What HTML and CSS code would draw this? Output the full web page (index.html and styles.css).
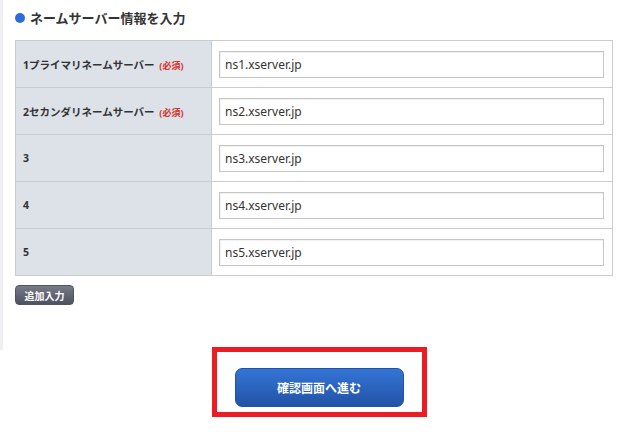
FILE: index.html
```html
<!DOCTYPE html>
<html lang="ja">
<head>
<meta charset="UTF-8" />
<meta name="viewport" content="width=device-width, initial-scale=1" />
<title>ネームサーバー情報を入力</title>
<link rel="stylesheet" href="styles.css">
</head>
<body>
<div class="panel">
  <h2 class="heading"><span class="dot"></span>ネームサーバー情報を入力</h2>
  <table class="ns-table">
    <tr>
      <th>1プライマリネームサーバー <span class="req">(必須)</span></th>
      <td><input type="text" value="ns1.xserver.jp"></td>
    </tr>
    <tr>
      <th>2セカンダリネームサーバー <span class="req">(必須)</span></th>
      <td><input type="text" value="ns2.xserver.jp"></td>
    </tr>
    <tr>
      <th>3</th>
      <td><input type="text" value="ns3.xserver.jp"></td>
    </tr>
    <tr>
      <th>4</th>
      <td><input type="text" value="ns4.xserver.jp"></td>
    </tr>
    <tr>
      <th>5</th>
      <td><input type="text" value="ns5.xserver.jp"></td>
    </tr>
  </table>
  <button class="add-btn">追加入力</button>
</div>
<div class="submit-area">
  <div class="highlight">
    <button class="submit-btn">確認画面へ進む</button>
  </div>
</div>
</body>
</html>
```

FILE: styles.css
```css
body {
  margin: 0;
  background-color: #ffffff;
  font-family: "Noto Sans", "Noto Sans CJK JP", sans-serif;
  color: #333333;
}
.panel {
  border-left: 3px solid #eef0f4;
  padding: 9px 27px 46px 12px;
  height: 295px;
}
.heading {
  display: flex;
  align-items: center;
  margin: 0 0 13px 0;
  font-size: 13px;
  font-weight: bold;
  line-height: 18px;
  color: #333333;
}
.dot {
  width: 10px;
  height: 10px;
  border-radius: 50%;
  background-color: #2f6bd6;
  margin-right: 5px;
}
.ns-table {
  width: 598px;
  border-collapse: collapse;
}
.ns-table th, .ns-table td {
  border: 1px solid #c9cbce;
  height: 46px;
  padding: 0 7px;
}
.ns-table th {
  width: 181px;
  background-color: #dde1e8;
  text-align: left;
  font-size: 10.5px;
  font-weight: bold;
  color: #333333;
}
.req {
  color: #d3322b;
  font-size: 9px;
  font-weight: bold;
  margin-left: 2px;
}
.ns-table input {
  width: 385px;
  height: 27px;
  box-sizing: border-box;
  border: 1px solid #c5c5c5;
  box-shadow: inset 1px 1px 1px rgba(0,0,0,0.06);
  padding: 0 5px;
  font-family: "Noto Sans", "Noto Sans CJK JP", sans-serif;
  font-size: 12px;
  color: #333333;
  display: block;
}
.add-btn {
  margin-top: 9px;
  width: 59px;
  height: 20px;
  padding: 0;
  border: 1px solid #50545f;
  border-radius: 4px;
  background: linear-gradient(#777b88, #4d5160);
  color: #ffffff;
  font-family: "Noto Sans", "Noto Sans CJK JP", sans-serif;
  font-size: 10px;
  font-weight: bold;
}
.submit-area {
  display: flex;
  justify-content: center;
  margin-top: -3px;
  padding-right: 2px;
}
.highlight {
  border: 5px solid #ec1c24;
  padding: 16px 18px 5px 18px;
}
.submit-btn {
  display: block;
  width: 169px;
  height: 39px;
  border: 1px solid #2352a3;
  border-radius: 7px;
  background: linear-gradient(#3474d6, #2253a6);
  color: #ffffff;
  font-family: "Noto Sans", "Noto Sans CJK JP", sans-serif;
  font-size: 12px;
  font-weight: bold;
}
```
